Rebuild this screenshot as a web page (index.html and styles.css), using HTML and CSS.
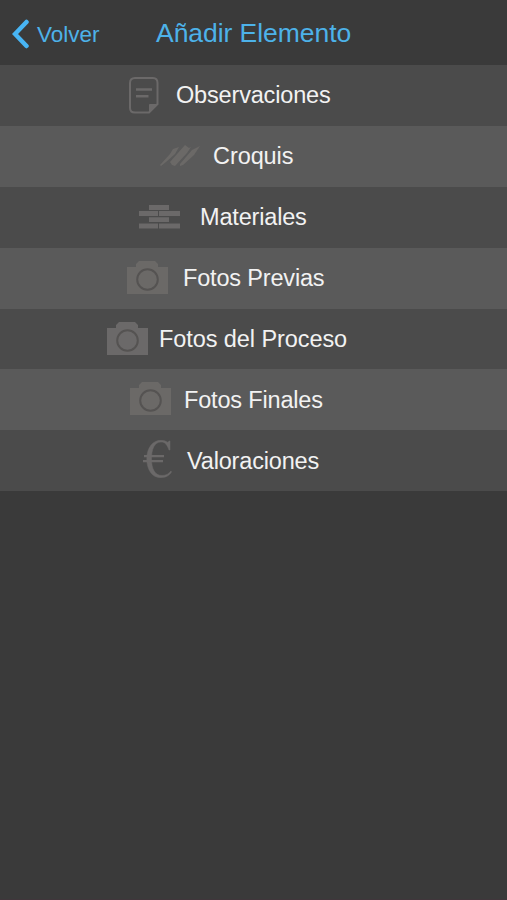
FILE: index.html
```html
<!DOCTYPE html>
<html lang="es">
<head>
<meta charset="utf-8">
<title>Añadir Elemento</title>
<link rel="stylesheet" href="styles.css">
</head>
<body>
<svg class="defs" aria-hidden="true">
  <symbol id="camera" viewBox="0 0 41 33">
    <path fill="currentColor" d="M0 6H9V3L12 0H28L31 3V6H41V33H0Z"/>
    <circle class="lens" cx="20.5" cy="18.5" r="10.3"/>
  </symbol>
</svg>
<header class="bar">
  <a class="back">
    <svg class="chevron" viewBox="0 0 17 30"><path d="M14.500 3L3 15L14.500 27"/></svg>
    <span>Volver</span>
  </a>
  <h1 class="title">Añadir Elemento</h1>
</header>
<main class="list">
  <div class="row notes">
    <svg class="icon" width="30" height="37" viewBox="0 0 30 37" fill="none" stroke="currentColor" stroke-width="2"><path d="M6 1H24Q28.5 1 28.5 6V27L20 35.5H6Q1 35.5 1 31V6Q1 1 6 1Z"/><path d="M7 12.5H23M7 19.2H19.5" stroke-width="2.4"/><path d="M20.5 35V27.5H28Z" fill="currentColor" stroke-width="1"/></svg>
    <span class="label">Observaciones</span>
  </div>
  <div class="row sketch">
    <svg class="icon" width="40" height="22" viewBox="0 0 40 22" fill="currentColor"><path d="M0 20L10 9L13 4L19 2L15 9L6 17L1 21Z"/><path d="M10 17L25 0L29 3L31 2L27 8L15 21L12 20Z"/><path d="M20 19L32 5L40 1L34 10L23 20L20 21Z"/></svg>
    <span class="label">Croquis</span>
  </div>
  <div class="row bricks">
    <svg class="icon" width="41" height="24" viewBox="0 0 41 24" fill="currentColor"><path d="M10 0H30V5H10ZM0 6H19V11H0ZM20 6H41V11H20ZM10 12.3H30V17H10ZM0 18.5H19V23.5H0ZM20 18.5H41V23.5H20Z"/></svg>
    <span class="label">Materiales</span>
  </div>
  <div class="row before">
    <svg class="icon" width="41" height="33"><use href="#camera"/></svg>
    <span class="label">Fotos Previas</span>
  </div>
  <div class="row during">
    <svg class="icon" width="41" height="33"><use href="#camera"/></svg>
    <span class="label">Fotos del Proceso</span>
  </div>
  <div class="row after">
    <svg class="icon" width="41" height="33"><use href="#camera"/></svg>
    <span class="label">Fotos Finales</span>
  </div>
  <div class="row euro">
    <svg class="icon" width="29" height="38" viewBox="0 0 29 38" fill="none" stroke="currentColor"><path fill="currentColor" stroke="currentColor" stroke-width=".5" d="M27 1V10H26C24 4.500 22 2 18 2C11.500 2 8.500 9 8.500 19C8.500 29 12 35.500 19 35.500C23 35.500 25.500 34 28 31L28.500 32C26 36 22.500 37.700 17.500 37.700C9 37.700 3.800 29.500 3.800 19C3.800 8 9.500 .3 18 .3C21 .3 23 1.300 24.500 2.200Q25.500 2.400 26 1Z"/><path d="M1 16.200H21M0 21.200H20" stroke-width="2.200"/></svg>
    <span class="label">Valoraciones</span>
  </div>
</main>
</body>
</html>
```
FILE: styles.css
```css
* {
  box-sizing: border-box;
}

body {
  margin: 0;
  min-height: 900px;
  background: #3a3a3a;
  border-bottom: 1px solid #40363b;
  font-family: "Liberation Sans", Arial, sans-serif;
}

.defs {
  display: none;
}

.bar {
  display: flex;
  height: 65px;
  padding-left: 12px;
  color: #4db2e9;
}

.back {
  display: flex;
  width: 144px;
  padding-top: 19px;
  gap: 8px;
  font-size: 22.5px;
  line-height: 31px;
}

.chevron {
  width: 17px;
  height: 30px;
  fill: none;
  stroke: #48b5f4;
  stroke-width: 4.5;
  stroke-linecap: round;
  stroke-linejoin: miter;
}

.title {
  margin: 0;
  padding-top: 18px;
  font-size: 26.5px;
  font-weight: 400;
  letter-spacing: -0.05px;
  line-height: 31px;
  white-space: nowrap;
}

.row {
  display: flex;
  align-items: center;
  height: 60.9px;
  padding-bottom: 0.4px;
  background: #4b4b4b;
  color: #6b6969;
}

.row:nth-child(even) {
  background: #5a5a5a;
  color: #6b6967;
}

.icon {
  flex: none;
}

.lens {
  fill: none;
  stroke: #555352;
  stroke-width: 2;
}

.label {
  color: #f2f2f2;
  font-size: 23.5px;
  letter-spacing: -0.17px;
  line-height: 30px;
  white-space: nowrap;
}

.row.notes { padding: 0 0 1px 129px; gap: 17px; }
.row.sketch { padding-left: 160px; gap: 13px; }
.row.bricks { padding-left: 139px; gap: 20px; }
.row.before { padding-left: 127px; gap: 15px; }
.row.during { padding-left: 107px; gap: 11px; }
.row.after { padding-left: 130px; gap: 13px; }
.row.euro { padding-left: 143px; gap: 15px; }

.sketch .label,
.during .label {
  letter-spacing: -0.08px;
}

.notes .icon {
  margin-top: 2px;
}

.before .icon,
.during .icon,
.after .icon {
  margin-bottom: 1.5px;
}

.euro .icon {
  margin-bottom: 3.5px;
}
```
